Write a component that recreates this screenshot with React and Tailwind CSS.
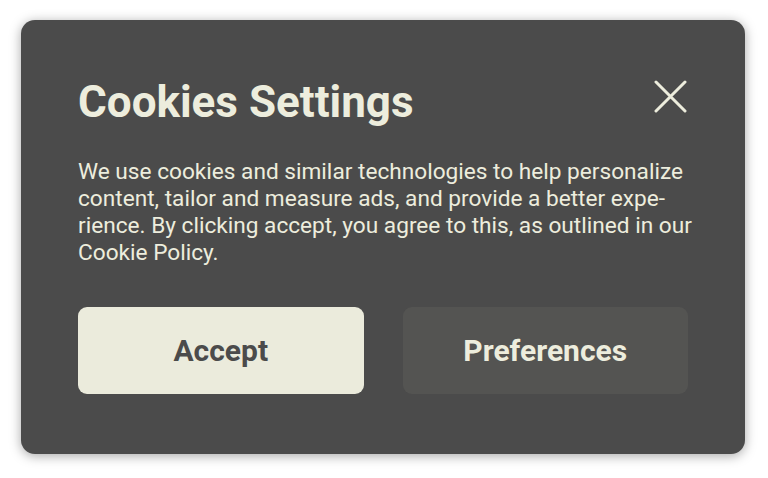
import React from 'react';

const CloseIcon = () => (
  <svg width="33" height="33" viewBox="0 0 33 33" fill="none" stroke="currentColor" strokeWidth="3" strokeLinecap="round">
    <path d="M2 2L31 31M31 2L2 31" />
  </svg>
);

export default function App() {
  return (
    <div className="w-[768px] h-[478px] overflow-hidden bg-white pt-[20px] pl-[21px] font-['Roboto',sans-serif]">
      <div className="w-[724px] h-[434px] rounded-[14px] bg-[#4b4b4b] shadow-[0_2px_12px_rgba(0,0,0,0.35)] px-[57px] pt-[56px] text-[#ededdd]">
        <div className="flex items-start justify-between">
          <h1 className="text-[44px] font-bold leading-[52px]">Cookies Settings</h1>
          <button className="mt-[4px] mr-[1px] text-[#ededdd]">
            <CloseIcon />
          </button>
        </div>
        <p className="mt-[30px] -mr-[8px] text-[22.65px] leading-[27px]">
          We use cookies and similar technologies to help personalize content, tailor and measure ads, and provide a better expe{'\u00AD'}rience. By clicking accept, you agree to this, as outlined in our Cookie Policy.
        </p>
        <div className="mt-[41px] grid grid-cols-2 gap-[39px]">
          <button className="h-[87px] rounded-[9px] bg-[#ebebdc] text-[#4b4b4b] text-[30px] font-bold">Accept</button>
          <button className="h-[87px] rounded-[9px] bg-[#545452] text-[#ededdd] text-[30px] font-bold">Preferences</button>
        </div>
      </div>
    </div>
  );
}
